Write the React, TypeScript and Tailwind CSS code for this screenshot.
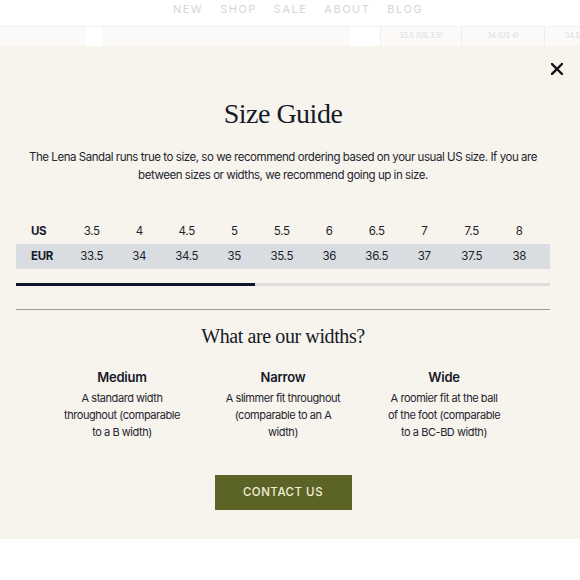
import React from 'react';

const us = ['3.5', '4', '4.5', '5', '5.5', '6', '6.5', '7', '7.5', '8'];
const eur = ['33.5', '34', '34.5', '35', '35.5', '36', '36.5', '37', '37.5', '38'];

const widths = [
    { name: 'Medium', lines: ['A standard width', 'throughout (comparable', 'to a B width)'] },
    { name: 'Narrow', lines: ['A slimmer fit throughout', '(comparable to an A', 'width)'] },
    { name: 'Wide', lines: ['A roomier fit at the ball', 'of the foot (comparable', 'to a BC-BD width)'] },
];

const serif = { fontFamily: '"Liberation Serif", "DejaVu Serif", serif' };

const App = () => {
    return (
        <div className="w-[580px] h-[580px] bg-white overflow-hidden text-[#1c1f2a]" style={{ fontFamily: 'Inter, "Noto Sans", sans-serif' }}>
            {/* Faded page nav behind the modal */}
            <nav className="h-[26px] flex justify-center items-start pt-[2px] pl-4 gap-[17px] text-[11px] leading-[14px] tracking-[1.5px] text-[#d6d6d6]">
                <span>NEW</span>
                <span>SHOP</span>
                <span>SALE</span>
                <span>ABOUT</span>
                <span>BLOG</span>
            </nav>

            {/* Faded size picker row */}
            <div className="h-[20px] flex border-t border-[#f1f1f1] bg-[#fbfaf9]">
                <div className="w-[86px]" />
                <div className="w-[16px] bg-white" />
                <div className="w-[248px]" />
                <div className="w-[30px] bg-white" />
                <div className="w-[82px] border-x border-[#eeeeee] flex items-center justify-center text-[7px] text-[#dadada]">33.5 (US 3.5)</div>
                <div className="w-[83px] border-r border-[#eeeeee] flex items-center justify-center text-[7px] text-[#dadada]">34 (US 4)</div>
                <div className="flex-1 flex items-center pl-[20px] text-[7px] text-[#dadada]">34.5</div>
            </div>

            {/* Modal */}
            <section className="relative h-[493px] bg-[#f7f3ed] pl-4 pr-[30px] pt-[51px]">
                <button className="absolute top-[17px] right-[17px] w-[12px] h-[12px]" aria-label="Close">
                    <svg viewBox="0 0 12 12" className="w-[12px] h-[12px]">
                        <path d="M1 1 L11 11 M11 1 L1 11" stroke="#111111" strokeWidth="2.4" strokeLinecap="square" />
                    </svg>
                </button>

                <h2 className="text-center text-[28px] leading-[34px] tracking-[-0.5px] text-[#161a28]" style={serif}>
                    Size Guide
                </h2>

                <p className="mt-[17px] text-center text-[11.5px] leading-[18px] tracking-[-0.45px] text-[#24262d] whitespace-nowrap">
                    The Lena Sandal runs true to size, so we recommend ordering based on your usual US size. If you are
                    <br />
                    between sizes or widths, we recommend going up in size.
                </p>

                {/* Size table */}
                <div className="mt-[35px] text-[11.5px] tracking-[-0.3px]">
                    <div className="h-[25px] grid grid-cols-[52px_repeat(10,47.5px)] items-center">
                        <span className="pl-[15px] font-bold text-[#161a28]">US</span>
                        {us.map((v) => (
                            <span key={v} className="text-center">{v}</span>
                        ))}
                    </div>
                    <div className="h-[25px] grid grid-cols-[52px_repeat(10,47.5px)] items-center bg-[#d9dce0]">
                        <span className="pl-[15px] font-bold text-[#161a28]">EUR</span>
                        {eur.map((v) => (
                            <span key={v} className="text-center">{v}</span>
                        ))}
                    </div>
                </div>

                {/* Scroll indicator */}
                <div className="mt-[14px] h-[3px] bg-[#dddcda] flex">
                    <div className="w-[239px] bg-[#10142c]" />
                </div>

                <div className="mt-[23px] h-px bg-[#9b9b9b]" />

                <h3 className="mt-[13px] text-center text-[20px] leading-[26px] tracking-[-0.4px] text-[#161a28]" style={serif}>
                    What are our widths?
                </h3>

                <div className="mt-[19px] w-[483px] mx-auto grid grid-cols-3">
                    {widths.map((w) => (
                        <div key={w.name} className="flex flex-col items-center">
                            <span className="text-[13px] leading-[18px] font-semibold tracking-[-0.2px] text-[#161a28]">{w.name}</span>
                            <div className="mt-[4px] text-[11px] leading-[17px] tracking-[-0.45px] text-center text-[#24262d]">
                                {w.lines.map((l) => (
                                    <div key={l} className="whitespace-nowrap">{l}</div>
                                ))}
                            </div>
                        </div>
                    ))}
                </div>

                <div className="mt-[34px] flex justify-center">
                    <button className="w-[137px] h-[35px] bg-[#5b6326] text-[#f1efd6] text-[11.5px] font-medium tracking-[0.5px]">
                        CONTACT US
                    </button>
                </div>
            </section>
        </div>
    );
};

export default App;
